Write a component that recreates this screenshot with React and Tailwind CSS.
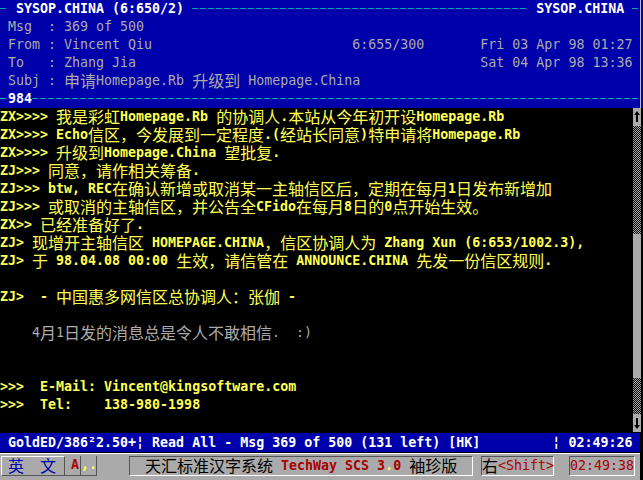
import React from "react";

const CJK_RE = /([\u2e80-\u9fff\u3000-\u303f\uff00-\uffef]+)/;
const CJK_TEST = /[\u2e80-\u9fff\u3000-\u303f\uff00-\uffef]/;

function T({ s, c = "", b = false }) {
  const parts = s.split(CJK_RE).filter((p) => p.length > 0);
  return parts.map((p, i) =>
    CJK_TEST.test(p) ? (
      <span
        key={i}
        className={
          "inline-block align-top h-[18px] leading-[16px] overflow-visible font-['Noto_Sans_CJK_SC',sans-serif] text-[16px] font-normal " +
          c
        }
      >
        {p}
      </span>
    ) : (
      <span key={i} className={(b ? "font-bold " : "font-normal ") + c}>
        {p}
      </span>
    )
  );
}

function Row({ children, className = "" }) {
  return <div className={"h-[18px] leading-[18px] whitespace-pre " + className}>{children}</div>;
}

function Dash({ w }) {
  return (
    <span
      className={
        "inline-block align-top h-[18px] bg-[image:linear-gradient(90deg,#00aaaa_6px,transparent_6px)] bg-[length:8px_1px] bg-repeat-x bg-[position:0_8px] " +
        w
      }
    />
  );
}

const G = "text-[#aaaaaa]";
const W = "text-white";
const Y = "text-[#ffff55]";

const msgs = [
  "ZX>>>> 我是彩虹Homepage.Rb 的协调人.本站从今年初开设Homepage.Rb",
  "ZX>>>> Echo信区，今发展到一定程度.(经站长同意)特申请将Homepage.Rb",
  "ZX>>>> 升级到Homepage.China 望批复.",
  "ZJ>>> 同意，请作相关筹备.",
  "ZJ>>> btw, REC在确认新增或取消某一主轴信区后，定期在每月1日发布新增加",
  "ZJ>>> 或取消的主轴信区，并公告全CFido在每月8日的0点开始生效。",
  "ZX>> 已经准备好了.",
  "ZJ> 现增开主轴信区 HOMEPAGE.CHINA，信区协调人为 Zhang Xun (6:653/1002.3),",
  "ZJ> 于 98.04.08 00:00 生效，请信管在 ANNOUNCE.CHINA 先发一份信区规则.",
  "",
  "ZJ>  - 中国惠多网信区总协调人：张伽 -",
  "",
  "@    4月1日发的消息总是令人不敢相信.  :)",
  "",
  "",
  ">>>  E-Mail: Vincent@kingsoftware.com",
  ">>>  Tel:    138-980-1998",
  "",
];

const checker =
  "bg-[image:conic-gradient(#aaaaaa_25%,#000000_0_50%,#aaaaaa_0_75%,#000000_0)] bg-[length:2px_2px]";

function Arrow({ down = false }) {
  return (
    <svg width="8" height="18" viewBox="0 0 8 18" className={down ? "rotate-180" : ""}>
      <polygon points="4,3 7,7 5,7 5,14 3,14 3,7 1,7" fill="#000" />
    </svg>
  );
}

export default function App() {
  return (
    <div className="w-[643px] h-[480px] bg-black overflow-hidden font-['DejaVu_Sans_Mono',monospace] text-[13.3px] flex flex-col">
      {/* header */}
      <div className="flex h-[108px] bg-[#0000aa] shrink-0">
        <div className="w-[640px]">
          <Row>
            <Dash w="w-[8px]" />
            <T s=" SYSOP.CHINA (6:650/2) " c={W} b />
            <Dash w="w-[336px]" />
            <T s=" SYSOP.CHINA " c={W} b />
            <Dash w="w-[8px]" />
          </Row>
          <Row>
            <T s=" Msg  : 369 of 500" c={G} />
          </Row>
          <Row>
            <T s={" From : Vincent Qiu".padEnd(44) + "6:655/300".padEnd(16) + "Fri 03 Apr 98 01:27"} c={G} />
          </Row>
          <Row>
            <T s={" To   : Zhang Jia".padEnd(60) + "Sat 04 Apr 98 13:36"} c={G} />
          </Row>
          <Row>
            <T s=" Subj : 申请Homepage.Rb 升级到 Homepage.China" c={G} />
          </Row>
          <Row>
            <Dash w="w-[8px]" />
            <T s="984" c={W} b />
            <Dash w="w-[608px]" />
          </Row>
        </div>
        <div className="w-[1px] bg-[#c0c0c0]" />
      </div>

      {/* messages */}
      <div className="flex h-[324px] shrink-0">
        <div className="w-[633px]">
          {msgs.map((m, i) =>
            m.startsWith("@") ? (
              <Row key={i}>
                <T s={m.slice(1)} c={G} />
              </Row>
            ) : (
              <Row key={i}>
                <T s={m} c={Y} b />
              </Row>
            )
          )}
        </div>
        <div className="w-[8px] flex flex-col">
          <div className="h-[18px] bg-[#aaaaaa]">
            <Arrow />
          </div>
          <div className={"h-[108px] " + checker} />
          <div className="h-[144px] bg-[#aaaaaa]" />
          <div className={"h-[36px] " + checker} />
          <div className="h-[18px] bg-[#aaaaaa]">
            <Arrow down />
          </div>
        </div>
      </div>

      {/* status bar */}
      <div className="mt-[1px] h-[19px] w-[640px] bg-[#0000aa] leading-[19px] whitespace-pre shrink-0">
        <T
          s={" GoldED/386²2.50+¦ Read All - Msg 369 of 500 (131 left) [HK]".padEnd(69) + "¦ 02:49:26"}
          c={W}
          b
        />
      </div>

      {/* bottom bar */}
      <div className="w-[640px] flex-1 border-t border-black flex flex-col">
        <div className="flex-1 bg-[#aaaaaa] border-t border-white pt-[2px] flex items-start">
          <div className="ml-[1px] w-[64px] h-[20px] border-t border-l border-white border-b border-r border-b-[#555555] border-r-[#555555] pl-[6px] leading-[18px] whitespace-pre">
            <T s="英  文" c="text-[#0000aa]" />
          </div>
          <div className="w-[16px] h-[20px] border-r border-b border-[#555555] pl-[6px] leading-[18px] whitespace-pre">
            <T s="A" c="text-[#aa0000]" b />
          </div>
          <div className="w-[16px] h-[20px] border-r border-b border-[#555555] leading-[18px] whitespace-pre">
            <T s=",." c="text-[#ffff55]" b />
          </div>
          <div className="ml-[32px] w-[344px] h-[20px] border border-t-[#555555] border-l-[#555555] border-b-white border-r-white pl-[15px] leading-[18px] whitespace-pre">
            <T s="天汇标准汉字系统 " c="text-black" />
            <T s="TechWay SCS 3" c="text-[#aa0000]" b />
            <T s="." c="text-[#ffff55]" b />
            <T s="0" c="text-[#aa0000]" b />
            <T s=" 袖珍版" c="text-black" />
          </div>
          <div className="ml-[8px] w-[73px] h-[20px] border border-t-[#555555] border-l-[#555555] border-b-white border-r-white leading-[18px] whitespace-pre">
            <T s="右" c="text-black" />
            <T s="<Shift>" c="text-[#aa0000]" />
          </div>
          <div className="ml-[15px] w-[66px] h-[20px] border border-t-[#555555] border-l-[#555555] border-b-white border-r-white leading-[18px] whitespace-pre">
            <T s="02:49:38" c="text-[#aa0000]" />
          </div>
        </div>
      </div>
    </div>
  );
}
